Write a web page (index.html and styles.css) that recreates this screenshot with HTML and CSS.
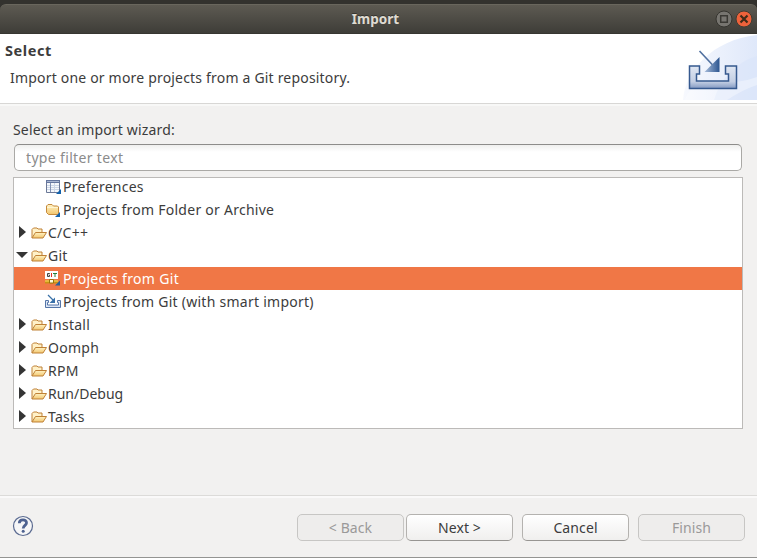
FILE: index.html
```html
<!DOCTYPE html>
<html lang="en">
<head>
<meta charset="utf-8">
<title>Import</title>
<link rel="stylesheet" href="styles.css">
</head>
<body>
<svg class="defs" width="0" height="0" aria-hidden="true">
  <defs>
    <linearGradient id="gold" x1="0" y1="0" x2="0" y2="1"><stop offset="0" stop-color="#fff3c4"/><stop offset="1" stop-color="#f2c66f"/></linearGradient>
    <linearGradient id="steel" x1="0" y1="0" x2="0" y2="1"><stop offset="0" stop-color="#e0e7f3"/><stop offset=".7" stop-color="#c3cee3"/><stop offset="1" stop-color="#8299c2"/></linearGradient>
    <linearGradient id="head" x1="0" y1="0" x2="1" y2="0"><stop offset="0" stop-color="#a8bddb"/><stop offset="1" stop-color="#2c5590"/></linearGradient>
    <linearGradient id="sky" x1="0" y1="0" x2="1" y2="0"><stop offset="0" stop-color="#f7f9fe"/><stop offset="1" stop-color="#dfe8fa"/></linearGradient>
    <symbol id="open" viewBox="0 0 16 16">
      <path d="M1 13V4.500L2.500 3h3.500l1 1h4v3" fill="#fff1c8" stroke="#bf8136"/>
      <path d="M1 13L4.500 7.500h11L12 13z" fill="url(#gold)" stroke="#bf8136" stroke-linejoin="round"/>
    </symbol>
    <symbol id="folder" viewBox="0 0 16 16">
      <path d="M1.500 4L3 2.500h4L8.500 4h4l1 1v6.500l-1 1h-9l-2-2z" fill="url(#gold)" stroke="#c58a3d"/>
      <path d="M2 5.500h11" stroke="#fff5d2"/><path d="M15 10v5h-5z" fill="#1262ac"/>
    </symbol>
    <symbol id="prefs" viewBox="0 0 16 16">
      <path d="M1.500 1.500h13v12h-13z" fill="#f4f7fb" stroke="#6b7897"/>
      <path d="M2 6.500h12M2 8.500h12M2 10.500h12M9.500 4v9" stroke="#ccd6e6"/><path d="M5.500 4v9" stroke="#8292b4"/>
      <path d="M1 1h14v3H1z" fill="#66779e"/><path d="M2 2.500h12" stroke="#a9b7d3"/><path d="M16 10v5h-5z" fill="#1262ac"/>
    </symbol>
    <symbol id="git" viewBox="0 0 16 16">
      <path d="M0 0h13v8H0z" fill="#fff"/>
      <path d="M4.800 2.500H2.500v3h2v-1.500H3.500" fill="none" stroke="#444"/><path d="M6.500 2v4" stroke="#e03428"/><path d="M8 2.500h4M10 2v4" stroke="#25813c"/>
      <path d="M0 9.500h13v3H0z" fill="#c99216"/><path d="M0 10h13" stroke="#ffe45c"/><path d="M4.500 8.500h4v3.500h-4z" fill="#fffbdc" stroke="#9b730c"/><path d="M15 9.500v5h-5z" fill="#28609b"/>
    </symbol>
    <symbol id="tray" viewBox="0 0 16 16">
      <path d="M.5 6.500h3v2h-1v2.500h11v-2.500h-1v-2h3v7H.5z" fill="#dce6f4" stroke="#5475a8"/>
      <path d="M3 1l6 6" stroke="#3b71a7" stroke-width="1.300"/><path d="M10 3.500V9H4.500z" fill="#3971aa"/>
    </symbol>
  </defs>
</svg>
<main class="window">
  <header class="titlebar">
    <h1 class="title">Import</h1>
    <svg class="controls" width="40" height="20" viewBox="0 0 40 20">
      <circle cx="10" cy="10" r="8" fill="#777570" stroke="#35342f"/><path d="M6.700 6.700h6.600v6.600H6.700z" fill="none" stroke="#3a3934" stroke-width="1.500"/>
      <circle cx="30" cy="10" r="8" fill="#ed623b" stroke="#403c32"/><path d="M26.500 6.500l7 7m0-7l-7 7" stroke="#402b18" stroke-width="2.200"/>
    </svg>
  </header>
  <section class="banner">
    <div class="copy"><h2>Select</h2><p>Import one or more projects from a Git repository.</p></div>
    <svg class="art" width="75" height="66" viewBox="0 0 75 66">
      <path d="M1 66C3 37 30 6 75 1v65z" fill="url(#sky)"/><path d="M32 66C39 43 55 28 75 22v44z" fill="#d8e4f9" opacity=".55"/><path d="M20 47Q50 52 75 43v8Q60 56 45 66H3Q6 55 20 47z" fill="#fff" opacity=".35"/>
      <path d="M7.500 32h10v8h-3v7h32v-7h-3v-8h11v22.500h-47z" fill="url(#steel)" stroke="#36598f" stroke-width="1.500"/>
      <path d="M17.500 17l15 16" stroke="#50709f" stroke-width="1.600"/><path d="M37.500 23v15H22.500z" fill="url(#head)"/>
    </svg>
  </section>
  <section class="content">
    <label class="prompt" for="filter">Select an import wizard:</label>
    <input id="filter" class="filter" placeholder="type filter text">
    <ul class="tree">
      <li class="child"><svg><use href="#prefs"/></svg><span>Preferences</span></li>
      <li class="child"><svg><use href="#folder"/></svg><span>Projects from Folder or Archive</span></li>
      <li><i></i><svg><use href="#open"/></svg><span>C/C++</span></li>
      <li><i class="down"></i><svg><use href="#open"/></svg><span>Git</span></li>
      <li class="child selected"><svg><use href="#git"/></svg><span>Projects from Git</span></li>
      <li class="child"><svg><use href="#tray"/></svg><span>Projects from Git (with smart import)</span></li>
      <li><i></i><svg><use href="#open"/></svg><span>Install</span></li>
      <li><i></i><svg><use href="#open"/></svg><span>Oomph</span></li>
      <li><i></i><svg><use href="#open"/></svg><span>RPM</span></li>
      <li><i></i><svg><use href="#open"/></svg><span class="tight">Run/Debug</span></li>
      <li><i></i><svg><use href="#open"/></svg><span>Tasks</span></li>
    </ul>
  </section>
  <footer class="footer">
    <svg class="help" width="22" height="22" viewBox="0 0 22 22"><circle cx="11" cy="11" r="9.500" fill="#f6f6f7" stroke="#5b6b91" stroke-width="1.200"/><path d="M7.300 8.200C7.300 3.800 14.700 3.800 14.500 8c-.1 2.300-3.300 2.600-3.300 5.500" fill="none" stroke="#4e6290" stroke-width="2.800"/><circle cx="11.200" cy="16.300" r="1.500" fill="#4e6290"/></svg>
    <button class="back" disabled>&lt; Back</button><button class="next">Next &gt;</button><button class="cancel">Cancel</button><button class="finish" disabled>Finish</button>
  </footer>
</main>
</body>
</html>
```
FILE: styles.css
```css
* { box-sizing: border-box; }
body { margin: 0; background: #33322e; color: #3c3c3c; font: 14px/23px "Noto Sans", sans-serif; }
h1, h2, p, ul { margin: 0; padding: 0; }
.defs { position: absolute; }
.window { height: 558px; padding-top: 4px; display: flex; flex-direction: column; border-bottom: 1px solid #949492; background: linear-gradient(#33322e 0 10px, #f2f1f0 10px); }
.titlebar { height: 30px; flex: none; display: grid; grid-template-columns: 44px 1fr 44px; align-items: center; border-radius: 6px 6px 0 0; background: linear-gradient(#5d5a52, #3e3d38); border-top: 1px solid #69665d; border-bottom: 1px solid #373631; }
.title { grid-column: 2; text-align: center; color: #dfdbd2; font: bold 13.5px/20px "Noto Sans", sans-serif; padding-right: 6px; text-shadow: 0 -1px #35342f; }
.controls { margin-left: 1px; }
.banner { height: 70px; flex: none; display: flex; justify-content: space-between; background: #fff; border-bottom: 1px solid #d8d7d5; }
.copy { padding: 4px 0 0 5px; }
h2 { font-size: 14.5px; line-height: 24px; letter-spacing: .6px; }
.copy p { padding: 4px 0 0 5px; letter-spacing: .19px; }
.content { height: 392px; flex: none; padding: 14px 14px 0 13px; border-top: 2px solid #f8f8f7; border-bottom: 1px solid #dcdbd9; }
.prompt { display: block; height: 24px; line-height: 19px; letter-spacing: .17px; }
.filter { display: block; width: 728px; height: 27px; margin: 0 0 6px 1px; padding: 0 11px; border: 1px solid #aaa9a6; border-top-color: #8d8c8a; border-radius: 5px; background: linear-gradient(#efefee, #fff 7px); font: inherit; letter-spacing: .34px; outline: 0; }
.filter::placeholder { color: #8b8b8b; opacity: 1; }
.tree { height: 252px; overflow: hidden; border: 1px solid #bcbab8; background: #fff; list-style: none; letter-spacing: .26px; }
.tree li { display: flex; height: 23px; align-items: center; padding-left: 5px; white-space: nowrap; }
.tree li:first-child { margin-top: -3px; }
.tree .child { padding-left: 31px; }
.tree svg { width: 16px; height: 16px; flex: none; margin-right: 2px; }
.tree li:not(.child) svg { margin-right: 1px; }
.tree .tight { letter-spacing: 0; }
.tree i { width: 12px; height: 13px; flex: none; }
.tree i::before { content: ""; display: block; width: 7px; height: 12px; background: #353535; clip-path: polygon(0 0, 100% 50%, 0 100%); }
.tree i.down { margin-left: -3px; width: 15px; height: 7px; }
.tree i.down::before { width: 12px; height: 6px; clip-path: polygon(0 0, 100% 0, 50% 100%); }
.tree .selected { background: #f07746; color: #fff; letter-spacing: .33px; }
.footer { flex: 1; display: flex; align-items: flex-start; padding: 16px 12px 0; border-top: 2px solid #faf9f9; }
.help { margin: 1px auto 0 0; }
button { width: 107px; height: 27px; margin: 0; padding: 0; font: inherit; color: #3c3c3c; border: 1px solid #b4b2af; border-bottom-color: #979592; border-radius: 5px; background: linear-gradient(#fff, #f0efee); letter-spacing: .1px; }
button:disabled { color: #9a9999; border-color: #c7c6c4; background: #eeedec; }
.next { margin-left: 2px; }
.cancel, .finish { margin-left: 9px; }
```
